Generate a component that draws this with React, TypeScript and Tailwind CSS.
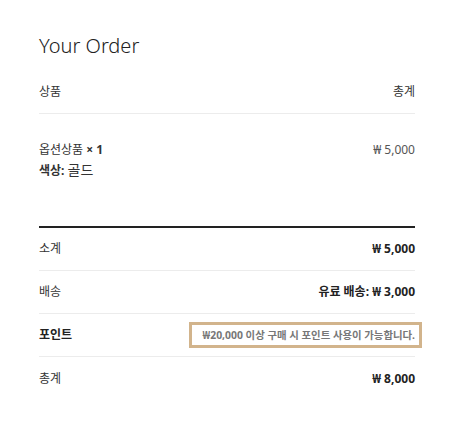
const latin = { fontFamily: '"Noto Sans", "Noto Sans CJK KR", sans-serif' };

type Row = { label: string; value: React.ReactNode; boldLabel?: boolean; last?: boolean };

function TotalRow({ label, value, boldLabel, last }: Row) {
  return (
    <div
      className={`flex h-[43px] items-center justify-between ${last ? '' : 'border-b border-[#ececec]'}`}
    >
      <span className={boldLabel ? 'font-bold text-[#222]' : 'text-[#333]'}>{label}</span>
      {value}
    </div>
  );
}

export default function App() {
  return (
    <div
      className="min-h-[433px] w-[455px] bg-white pl-[39px] pr-[40px] pt-[32px] text-[12px] leading-[20px] text-[#333]"
      style={latin}
    >
      <h2 className="text-[20px] font-light leading-[28px] text-[#222]">Your Order</h2>

      <div className="mt-[10px] flex h-[44px] items-center justify-between border-b border-[#ececec]">
        <span>상품</span>
        <span>총계</span>
      </div>

      <div className="flex justify-between border-b-2 border-[#222] pb-[45px] pt-[26px]">
        <div>
          <div>
            옵션상품 <span className="font-bold">× 1</span>
          </div>
          <div>
            <span className="font-bold">색상:</span> <span className="text-[14px]">골드</span>
          </div>
        </div>
        <div className="text-[#555]">₩ 5,000</div>
      </div>

      <TotalRow label="소계" value={<span className="font-bold text-[#222]">₩ 5,000</span>} />
      <TotalRow
        label="배송"
        value={<span className="font-bold text-[#222]">유료 배송: ₩ 3,000</span>}
      />
      <TotalRow
        label="포인트"
        boldLabel
        value={
          <div className="-mr-[7px] flex h-[26px] items-center border-[3px] border-[#d2b48c] pl-[11px] pr-[4px] text-[10.4px] font-bold text-[#777]">
            ₩20,000 이상 구매 시 포인트 사용이 가능합니다.
          </div>
        }
      />
      <TotalRow label="총계" last value={<span className="font-bold text-[#222]">₩ 8,000</span>} />
    </div>
  );
}
